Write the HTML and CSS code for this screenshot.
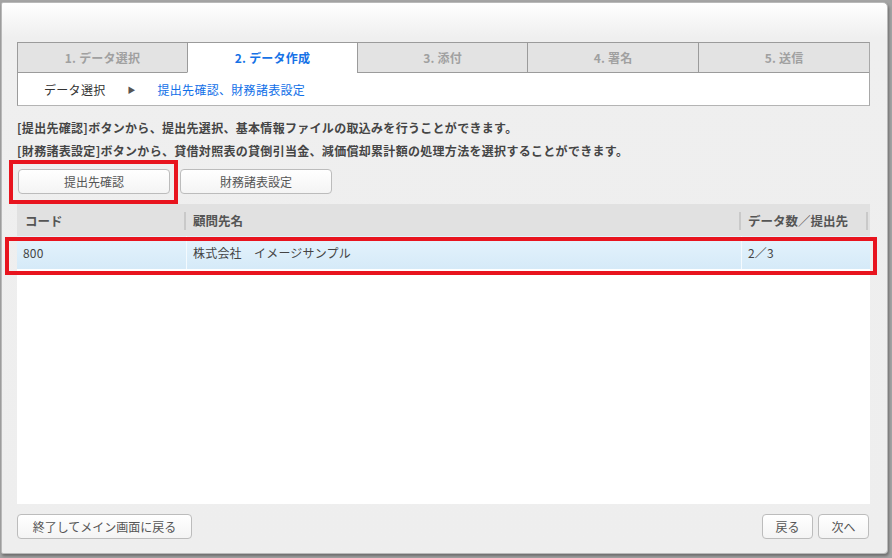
FILE: index.html
```html
<!DOCTYPE html>
<html lang="ja">
<head>
<meta charset="utf-8">
<title>データ作成</title>
<link rel="stylesheet" href="styles.css">
</head>
<body>
<div class="dialog">
  <div class="steps">
    <div class="tabs">
      <div class="tab">1. データ選択</div>
      <div class="tab active">2. データ作成</div>
      <div class="tab">3. 添付</div>
      <div class="tab">4. 署名</div>
      <div class="tab">5. 送信</div>
    </div>
    <div class="crumbs">
      <span class="crumb">データ選択</span>
      <span class="arrow">&#9654;</span>
      <span class="crumb current">提出先確認、財務諸表設定</span>
    </div>
  </div>

  <div class="desc">
    <p>[提出先確認]ボタンから、提出先選択、基本情報ファイルの取込みを行うことができます。</p>
    <p>[財務諸表設定]ボタンから、貸借対照表の貸倒引当金、減価償却累計額の処理方法を選択することができます。</p>
  </div>

  <div class="actions">
    <button class="btn wide">提出先確認</button>
    <button class="btn wide">財務諸表設定</button>
  </div>

  <div class="grid">
    <div class="grid-head">
      <div class="hcell c1">コード</div>
      <div class="hcell c2">顧問先名</div>
      <div class="hcell c3">データ数／提出先</div>
    </div>
    <div class="grid-row">
      <div class="cell c1">800</div>
      <div class="cell c2">株式会社　イメージサンプル</div>
      <div class="cell c3">2／3</div>
    </div>
  </div>

  <div class="footer">
    <button class="btn exit">終了してメイン画面に戻る</button>
    <div class="nav">
      <button class="btn small">戻る</button>
      <button class="btn small">次へ</button>
    </div>
  </div>
</div>
<div class="mark mark-btn"></div>
<div class="mark mark-row"></div>
</body>
</html>
```

FILE: styles.css
```css
* { box-sizing: border-box; }
html, body { margin: 0; padding: 0; }
body {
  width: 892px;
  height: 558px;
  overflow: hidden;
  background: #a4a4a4;
  font-family: "Noto Sans CJK JP", "Noto Sans", sans-serif;
  font-size: 12px;
  color: #333;
  position: relative;
}
.dialog {
  margin: 2px 0 0 1px;
  width: 887px;
  height: 552px;
  border: 1px solid #b9b9b9;
  border-radius: 2px 5px 4px 2px;
  background: linear-gradient(#ffffff 0, #efefef 34px, #eeeeee 100%);
  box-shadow: 1px 2px 3px rgba(0,0,0,0.35);
  padding: 39px 0 0 15px;
  display: flex;
  flex-direction: column;
}
.steps {
  width: 853px;
  border: 1px solid #9b9b9b;
  border-right-color: #a8a8a8;
  border-bottom-color: #b4b4b4;
  background: #fff;
}
.tabs {
  display: grid;
  grid-template-columns: 169px 170px 170px 171px 171px;
  height: 30px;
}
.tab {
  background: #e3e3e3;
  border-bottom: 1px solid #9b9b9b;
  border-left: 1px solid #9b9b9b;
  color: #a0a0a0;
  font-weight: bold;
  font-size: 12px;
  letter-spacing: 0.2px;
  display: flex;
  align-items: center;
  justify-content: center;
}
.tab:first-child { border-left: none; }
.tab.active {
  background: #fff;
  border-bottom-color: #fff;
  color: #1672e6;
}
.crumbs {
  height: 32px;
  display: flex;
  align-items: center;
  padding-left: 26px;
}
.crumb { color: #333; font-size: 12px; letter-spacing: 0.3px; }
.crumb.current { color: #1170e8; }
.arrow {
  font-size: 8px;
  color: #555;
  margin: 0 22px 0 22px;
}
.desc {
  margin-top: 10px;
}
.desc p {
  margin: 0;
  line-height: 23px;
  font-weight: bold;
  color: #454545;
  font-size: 12px;
  letter-spacing: 0.3px;
}
.actions {
  display: flex;
  gap: 10px;
  margin-top: 7px;
  padding-left: 1px;
}
.btn {
  font-family: "Noto Sans CJK JP", "Noto Sans", sans-serif;
  font-size: 12px;
  color: #555;
  height: 25px;
  background: linear-gradient(#ffffff, #f4f4f4);
  border: 1px solid #bcbcbc;
  border-radius: 4px;
  padding: 0;
  display: flex;
  align-items: center;
  justify-content: center;
}
.btn.wide { width: 152px; }
.grid {
  margin-top: 10px;
  width: 853px;
  height: 300px;
  background: #fff;
}
.grid-head {
  display: flex;
  height: 32px;
  background: #e1e1e1;
}
.hcell {
  position: relative;
  display: flex;
  align-items: center;
  font-weight: bold;
  color: #555;
  font-size: 12.5px;
  padding-left: 8px;
}
.hcell::after {
  content: "";
  position: absolute;
  right: 0;
  top: 8px;
  height: 18px;
  width: 2px;
  background: #c9c9c9;
}
.c1 { width: 169px; }
.c2 { width: 555px; }
.c3 { width: 127px; }
.hcell.c2, .hcell.c3 { padding-left: 7px; }
.grid-row {
  display: flex;
  height: 33px;
  background: linear-gradient(#e5f3fc, #d5eaf8);
}
.cell {
  display: flex;
  align-items: center;
  color: #444;
  font-size: 12px;
  letter-spacing: 0.2px;
  padding-left: 6px;
  border-right: 1px solid #f4fafe;
}
.grid-row .c1 { width: 170px; }
.grid-row .c2 { width: 555px; }
.grid-row .c3 { width: 126px; border-right: none; }
.footer {
  margin-top: 10px;
  width: 853px;
  display: flex;
  justify-content: space-between;
}
.btn.exit { width: 175px; }
.nav { display: flex; gap: 5px; padding-right: 1px; }
.btn.small { width: 51px; }
.mark {
  position: absolute;
  border: 4px solid #e8141e;
}
.mark-btn { left: 9px; top: 160px; width: 169px; height: 44px; }
.mark-row { left: 5px; top: 237px; width: 872px; height: 38px; }
```
